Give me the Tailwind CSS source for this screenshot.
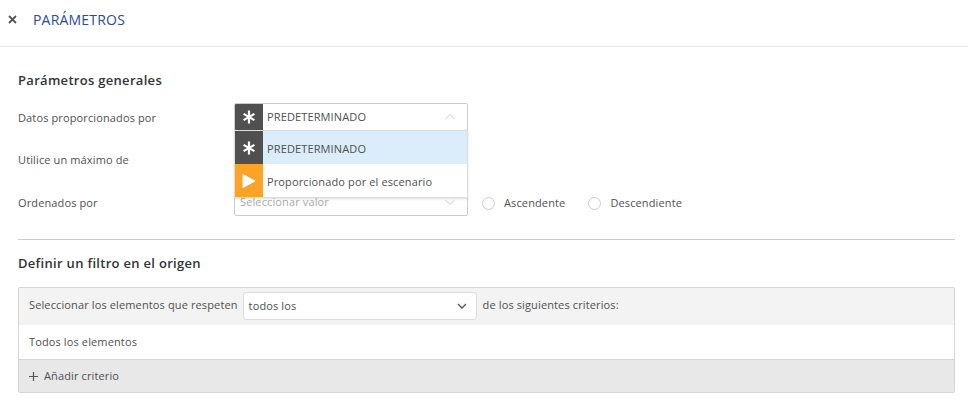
<!DOCTYPE html>
<html lang="es">
<head>
  <meta charset="UTF-8">
  <title>Parámetros</title>
  <script src="https://cdn.jsdelivr.net/npm/@tailwindcss/browser@4"></script>
</head>
<body class="bg-white font-['Open_Sans',sans-serif] text-[11px] tracking-[0.125px] text-[#505050]">
  <header class="flex items-center h-[47px] pb-[8px] border-b border-[#e8e8e8]">
    <svg class="ml-[8px] w-[9px] h-[9px]" viewBox="0 0 9 9"><path d="M1 1l7 7M8 1l-7 7" stroke="#555" stroke-width="1.8" fill="none"/></svg>
    <h1 class="ml-[16px] text-[14px] tracking-[0.2px] text-[#2c4a9a]">PARÁMETROS</h1>
  </header>

  <main class="pl-[18px] pr-[13px]">
    <h2 class="mt-[24px] h-[19px] leading-[19px] text-[13px] tracking-[0.3px] font-semibold text-[#333]">Parámetros generales</h2>

    <div class="relative mt-[13px] h-[123px]">
      <div class="flex items-center h-[28px]">
        <span class="w-[216px] mt-[2px]">Datos proporcionados por</span>
        <div class="flex items-center w-[234px] h-[28px] border border-[#ccc] rounded-[2px] overflow-hidden">
          <span class="flex items-center justify-center w-[28px] h-full bg-[#505050]">
            <svg class="w-[14px] h-[14px]" viewBox="0 0 14 14"><path d="M7 .5v13M1.6 3.9l10.8 6.2M12.4 3.9L1.6 10.1" stroke="#fff" stroke-width="2.2" fill="none"/></svg>
          </span>
          <span class="ml-[4px] flex-1">PREDETERMINADO</span>
          <svg class="mr-[12px] w-[10px] h-[6px]" viewBox="0 0 10 6"><path d="M0 5.5l5-5 5 5" stroke="#ccc" stroke-width="1" fill="none"/></svg>
        </div>
      </div>
      <div class="flex items-center h-[28px] mt-[14px]">
        <span class="mt-[2px]">Utilice un máximo de</span>
      </div>
      <div class="flex items-center h-[28px] mt-[15px]">
        <span class="w-[216px] mt-[2px]">Ordenados por</span>
        <div class="flex items-center w-[234px] h-[28px] border border-[#ccc] rounded-[2px]">
          <span class="ml-[5px] flex-1 text-[#aaa]">Seleccionar valor</span>
          <svg class="mr-[12px] w-[10px] h-[6px]" viewBox="0 0 10 6"><path d="M0 .5l5 5 5-5" stroke="#ccc" stroke-width="1" fill="none"/></svg>
        </div>
        <span class="ml-[14px] mt-[2px] w-[13px] h-[13px] rounded-full border border-[#ccc]"></span>
        <span class="ml-[9px] mt-[2px]">Ascendente</span>
        <span class="ml-[23px] mt-[2px] w-[13px] h-[13px] rounded-full border border-[#ccc]"></span>
        <span class="ml-[9px] mt-[2px]">Descendiente</span>
      </div>

      <ul class="absolute left-[216px] top-[27px] w-[234px] bg-white border border-[#ddd] shadow-sm">
        <li class="flex items-center h-[33px] bg-[#dbecfa]">
          <span class="flex items-center justify-center w-[28px] h-full bg-[#505050]">
            <svg class="w-[14px] h-[14px]" viewBox="0 0 14 14"><path d="M7 .5v13M1.6 3.9l10.8 6.2M12.4 3.9L1.6 10.1" stroke="#fff" stroke-width="2.2" fill="none"/></svg>
          </span>
          <span class="ml-[4px] mt-[3px]">PREDETERMINADO</span>
        </li>
        <li class="flex items-center h-[33px]">
          <span class="flex items-center justify-center w-[28px] h-full bg-[#fca328]">
            <svg class="w-[14px] h-[16px]" viewBox="0 0 14 16"><path d="M1 1.5l12 6.5-12 6.5z" fill="#fff" stroke="#fff" stroke-linejoin="round"/></svg>
          </span>
          <span class="ml-[4px] mt-[3px]">Proporcionado por el escenario</span>
        </li>
      </ul>
    </div>

    <hr class="mt-[13px] border-t border-[#ccc]">

    <h2 class="mt-[14px] h-[19px] leading-[19px] text-[13px] tracking-[0.3px] font-semibold text-[#333]">Definir un filtro en el origen</h2>

    <section class="mt-[14px] border border-[#d4d4d4] rounded-[2px]">
      <div class="flex items-center h-[37px] pb-[1px] bg-[#f3f3f3]">
        <span class="ml-[10px] mb-[2px]">Seleccionar los elementos que respeten</span>
        <div class="flex items-center ml-[5px] w-[234px] h-[28px] bg-white border border-[#ddd] rounded-[3px]">
          <span class="ml-[5px] flex-1">todos los</span>
          <svg class="mr-[9px] w-[10px] h-[6px]" viewBox="0 0 10 6"><path d="M1 1l4 4 4-4" stroke="#555" stroke-width="1.3" fill="none"/></svg>
        </div>
        <span class="ml-[6px] mb-[2px]">de los siguientes criterios:</span>
      </div>
      <div class="flex items-center h-[35px] pl-[10px] border-b border-[#d4d4d4]">Todos los elementos</div>
      <div class="flex items-center h-[32px] pl-[10px] bg-[#e8e8e8]">
        <svg class="w-[9px] h-[9px]" viewBox="0 0 9 9"><path d="M4.5 0v9M0 4.5h9" stroke="#555" stroke-width="1.2" fill="none"/></svg>
        <span class="ml-[6px]">Añadir criterio</span>
      </div>
    </section>
  </main>
</body>
</html>
